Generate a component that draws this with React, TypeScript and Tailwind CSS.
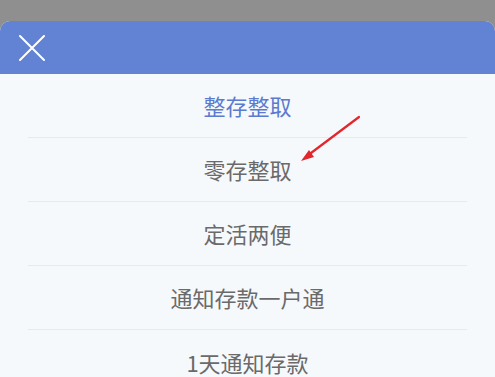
const items = ['整存整取', '零存整取', '定活两便', '通知存款一户通', '1天通知存款']

export default function App() {
  return (
    <div className="relative h-[377px] w-[495px] overflow-hidden bg-[#8f8f8f]" style={{ fontFamily: '"Noto Sans CJK SC", "Noto Sans", sans-serif' }}>
      <div className="mt-[21px] h-[356px] overflow-hidden rounded-t-[10px] bg-[#f6f9fc]">
        {/* header */}
        <div className="flex h-[53px] items-center bg-[#6282d3] pl-[19px]">
          <svg width="26" height="26" viewBox="0 0 26 26" className="mt-[1px]">
            <path d="M1 1 L25 25 M25 1 L1 25" stroke="#fff" strokeWidth="2" strokeLinecap="round" />
          </svg>
        </div>
        {/* list */}
        <div className="px-[28px]">
          {items.map((label, i) => (
            <div
              key={label}
              className={`flex items-center justify-center text-[22px] ${i === 0 ? 'h-[64px] text-[#5b7bd0]' : 'h-[64px] text-[#6a6a6a]'} ${i < items.length - 1 ? 'border-b border-[#e6e9ee]' : ''}`}
            >
              {label}
            </div>
          ))}
        </div>
      </div>
      {/* annotation arrow */}
      <svg className="absolute left-0 top-0" width="495" height="377">
        <line x1="359" y1="117" x2="307" y2="156" stroke="#e3262b" strokeWidth="2.2" strokeLinecap="round" />
        <polygon points="301,161 309,150 314,157" fill="#e3262b" />
      </svg>
    </div>
  )
}
